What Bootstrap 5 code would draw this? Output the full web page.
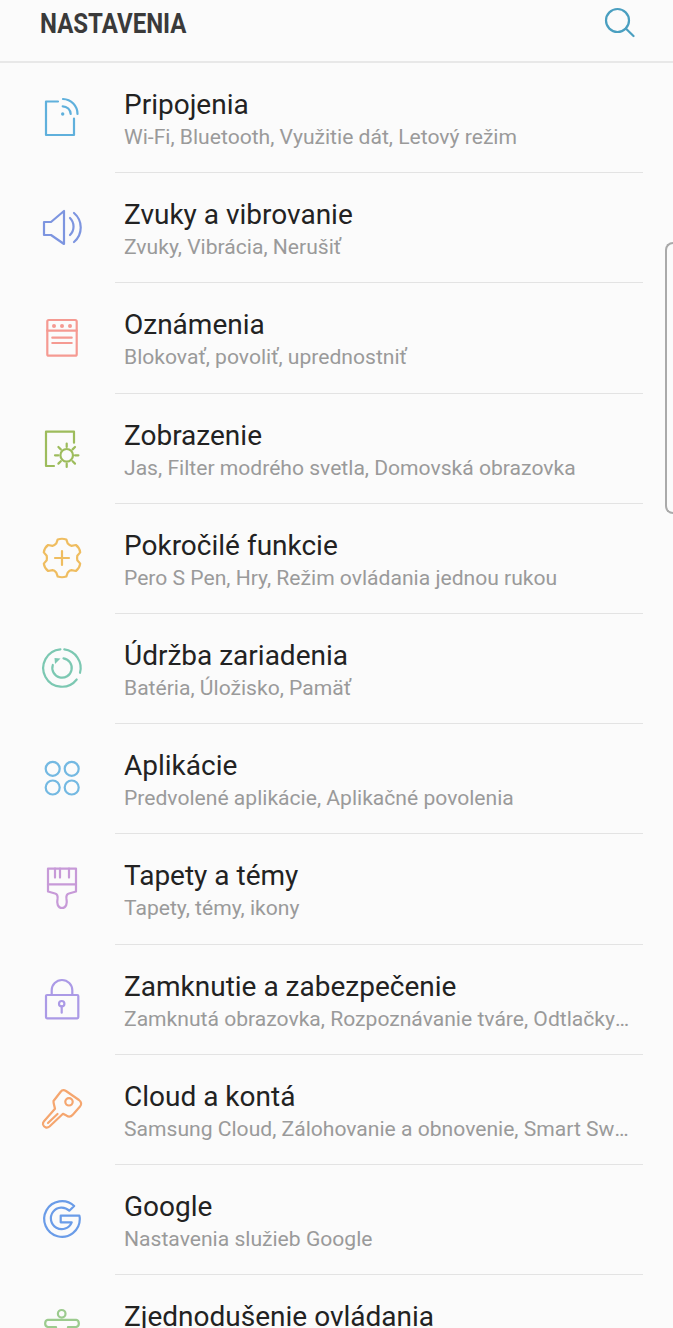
<!DOCTYPE html>
<html lang="sk">
<head>
    <meta charset="UTF-8">
    <meta name="viewport" content="width=device-width, initial-scale=1.0">
    <title>Nastavenia</title>
    <link href="https://cdn.jsdelivr.net/npm/bootstrap@5.3.0/dist/css/bootstrap.min.css" rel="stylesheet">
    <style>
        html, body {
            height: 1328px;
            overflow: hidden;
        }
        body {
            background-color: #fbfbfb;
            font-family: Roboto, sans-serif;
        }
        .top-bar {
            height: 63px;
            padding: 0 38px 0 40px;
            border-bottom: 2px solid #e8e8e8;
        }
        .top-title {
            font-size: 27px;
            font-weight: 700;
            color: #3a3a3a;
            transform: scaleX(.89);
            transform-origin: left center;
            line-height: 1;
            margin-top: -12px;
        }
        .search-ico {
            margin-top: -16px;
        }
        .set-row {
            height: 110.2px;
            padding-left: 40px;
            padding-right: 30px;
        }
        .ico-box {
            width: 75px;
            flex: none;
            padding-top: 32px;
        }
        .ico-box svg {
            display: block;
            overflow: visible;
        }
        .set-body {
            min-width: 0;
            padding: 26px 11px 0 9px;
            border-bottom: 1px solid #e3e3e3;
        }
        .set-name {
            font-size: 28px;
            line-height: 32px;
            color: #222;
        }
        .set-sub {
            font-size: 21.1px;
            line-height: 32px;
            color: #9a9a9a;
        }
        .ln {
            fill: none;
            stroke-width: 2.2;
            stroke-linecap: round;
            stroke-linejoin: round;
        }
        .scroll-grip {
            position: absolute;
            top: 242px;
            right: 0;
            width: 8px;
            height: 272px;
            border: 2px solid #aaa;
            border-right: 0;
            border-radius: 8px 0 0 8px;
        }
    </style>
</head>
<body>
    <div class="top-bar d-flex justify-content-between align-items-center">
        <div class="top-title">NASTAVENIA</div>
        <svg class="search-ico" width="32" height="32" viewBox="0 0 32 32">
            <circle class="ln" cx="14.5" cy="13.5" r="11.5" stroke="#4a9fc0"/>
            <path class="ln" d="M22.8 21.5L30.5 29" stroke="#4a9fc0"/>
        </svg>
    </div>

    <div class="d-flex flex-column">
        <div class="set-row d-flex">
            <div class="ico-box">
                <svg width="44" height="44" viewBox="0 0 44 44">
                    <g class="ln" stroke="#5fb0dc">
                        <path d="M18 6.5H6V40H34V23.5"/>
                        <path d="M22.7 11.3A8 8 0 0 1 30.7 19"/>
                        <path d="M23 4A15 15 0 0 1 37.5 19"/>
                    </g>
                    <circle cx="22.7" cy="19" r="1.7" fill="#5fb0dc"/>
                </svg>
            </div>
            <div class="set-body flex-grow-1">
                <div class="set-name text-truncate">Pripojenia</div>
                <div class="set-sub text-truncate">Wi-Fi, Bluetooth, Využitie dát, Letový režim</div>
            </div>
        </div>
        <div class="set-row d-flex">
            <div class="ico-box">
                <svg width="44" height="44" viewBox="0 0 44 44">
                    <g class="ln" stroke="#7d95e0">
                        <path d="M4 17H11L24 6V39L11 30H4Z"/>
                        <path d="M30 13A12 12 0 0 1 30 30"/>
                        <path d="M34 8A19 19 0 0 1 34 37"/>
                    </g>
                </svg>
            </div>
            <div class="set-body flex-grow-1">
                <div class="set-name text-truncate">Zvuky a vibrovanie</div>
                <div class="set-sub text-truncate">Zvuky, Vibrácia, Nerušiť</div>
            </div>
        </div>
        <div class="set-row d-flex">
            <div class="ico-box">
                <svg width="44" height="44" viewBox="0 0 44 44">
                    <g class="ln" stroke="#f59a92">
                        <rect x="7.3" y="5" width="29.4" height="35.7" rx="1.5"/>
                        <path d="M7.3 15.7H36.7M12.3 22.7H31.7M12.3 28H31.7"/>
                    </g>
                    <g fill="#f59a92">
                        <circle cx="14" cy="11" r="2"/>
                        <circle cx="22" cy="11" r="2"/>
                        <circle cx="30" cy="11" r="2"/>
                    </g>
                </svg>
            </div>
            <div class="set-body flex-grow-1">
                <div class="set-name text-truncate">Oznámenia</div>
                <div class="set-sub text-truncate">Blokovať, povoliť, uprednostniť</div>
            </div>
        </div>
        <div class="set-row d-flex">
            <div class="ico-box">
                <svg width="44" height="44" viewBox="0 0 44 44">
                    <g class="ln" stroke="#9dbc5c">
                        <path d="M14 40H6V5.7H34V16.7"/>
                        <circle cx="26.7" cy="29.3" r="6.3"/>
                        <path d="M26.7 17.6V21M26.7 37.6V41M15 29.3H18.4M35 29.3H38.4M18.4 21L20.8 23.4M32.6 35.2L35 37.6M18.4 37.6L20.8 35.2M32.6 23.4L35 21"/>
                    </g>
                </svg>
            </div>
            <div class="set-body flex-grow-1">
                <div class="set-name text-truncate">Zobrazenie</div>
                <div class="set-sub text-truncate">Jas, Filter modrého svetla, Domovská obrazovka</div>
            </div>
        </div>
        <div class="set-row d-flex">
            <div class="ico-box">
                <svg width="44" height="44" viewBox="0 0 44 44">
                    <g class="ln" stroke="#efbd60">
                        <path d="M17.7 3.5Q22 2 26.3 3.5L27.8 7.6Q29.5 9.5 31.5 9.8L35.9 9Q39.5 11.5 40.2 16.4L37.3 19.8Q36.9 22 37.3 24.2L40.2 27.6Q39.5 32.5 35.9 35L31.5 34.2Q29.5 34.5 27.8 36.4L26.3 40.5Q22 42 17.7 40.5L16.2 36.4Q14.5 34.5 12.5 34.2L8.1 35Q4.5 32.5 3.8 27.6L6.7 24.2Q7.1 22 6.7 19.8L3.8 16.4Q4.5 11.5 8.1 9L12.5 9.8Q14.5 9.5 16.2 7.6Z"/>
                        <path d="M22 15V29M15 22H29"/>
                    </g>
                </svg>
            </div>
            <div class="set-body flex-grow-1">
                <div class="set-name text-truncate">Pokročilé funkcie</div>
                <div class="set-sub text-truncate">Pero S Pen, Hry, Režim ovládania jednou rukou</div>
            </div>
        </div>
        <div class="set-row d-flex">
            <div class="ico-box">
                <svg width="44" height="44" viewBox="0 0 44 44">
                    <g class="ln" stroke="#7cc8b2">
                        <path d="M24.3 3.4A18.7 18.7 0 0 1 40 26.8"/>
                        <path d="M36.7 33.5A18.7 18.7 0 1 1 20.4 3.4"/>
                        <path d="M23.5 12.4A9.7 9.7 0 1 1 12.8 19"/>
                    </g>
                    <path d="M14.5 12L20.5 12.5L15 18Z" fill="#7cc8b2"/>
                </svg>
            </div>
            <div class="set-body flex-grow-1">
                <div class="set-name text-truncate">Údržba zariadenia</div>
                <div class="set-sub text-truncate">Batéria, Úložisko, Pamäť</div>
            </div>
        </div>
        <div class="set-row d-flex">
            <div class="ico-box">
                <svg width="44" height="44" viewBox="0 0 44 44">
                    <g class="ln" stroke="#74b9e2">
                        <circle cx="12.7" cy="12.8" r="7"/>
                        <circle cx="31.7" cy="12.8" r="7"/>
                        <circle cx="12.7" cy="31.5" r="7"/>
                        <circle cx="31.7" cy="31.5" r="7"/>
                    </g>
                </svg>
            </div>
            <div class="set-body flex-grow-1">
                <div class="set-name text-truncate">Aplikácie</div>
                <div class="set-sub text-truncate">Predvolené aplikácie, Aplikačné povolenia</div>
            </div>
        </div>
        <div class="set-row d-flex">
            <div class="ico-box">
                <svg width="44" height="44" viewBox="0 0 44 44">
                    <g class="ln" stroke="#c79ad8">
                        <path d="M8 2.6H36V25.5L29 27.5C26.5 28.2 26 30 26.5 33C27.3 37 26.5 42 22 42C17.5 42 16.7 37 17.5 33C18 30 17.5 28.2 15 27.5L8 25.5Z"/>
                        <path d="M8 18.3H36M15 2.6V11.6M20 2.6V11.6M29 2.6V11.6"/>
                    </g>
                </svg>
            </div>
            <div class="set-body flex-grow-1">
                <div class="set-name text-truncate">Tapety a témy</div>
                <div class="set-sub text-truncate">Tapety, témy, ikony</div>
            </div>
        </div>
        <div class="set-row d-flex">
            <div class="ico-box">
                <svg width="44" height="44" viewBox="0 0 44 44">
                    <g class="ln" stroke="#ab9ae6">
                        <rect x="6" y="18" width="32.3" height="23.3" rx="1"/>
                        <path d="M11.7 18V13.3A10.3 10.3 0 0 1 32.3 13.3V18"/>
                        <circle cx="21.7" cy="26.7" r="2.7"/>
                        <path d="M21.7 29.4V35.7"/>
                    </g>
                </svg>
            </div>
            <div class="set-body flex-grow-1">
                <div class="set-name text-truncate">Zamknutie a zabezpečenie</div>
                <div class="set-sub text-truncate">Zamknutá obrazovka, Rozpoznávanie tváre, Odtlačky prstov</div>
            </div>
        </div>
        <div class="set-row d-flex">
            <div class="ico-box">
                <svg width="44" height="44" viewBox="0 0 44 44">
                    <g class="ln" stroke="#f5a66f">
                        <path d="M13.5 14L20.5 5C22 3 24 2.8 26 4L39 13C41.5 15 41.8 17.5 40 19.5L33 27.5C31 29.8 28.5 30 26.5 28.6L23 26.8L9.5 39.5C7 41.5 4 40.5 3 37.5C2.8 36.3 3 35.3 4 34.2L15 21.8C14.5 19 13.3 16.5 13.5 14Z"/>
                        <circle cx="29" cy="14.8" r="3.7"/>
                        <path d="M8 36L17.5 27"/>
                    </g>
                </svg>
            </div>
            <div class="set-body flex-grow-1">
                <div class="set-name text-truncate">Cloud a kontá</div>
                <div class="set-sub text-truncate">Samsung Cloud, Zálohovanie a obnovenie, Smart Switch</div>
            </div>
        </div>
        <div class="set-row d-flex">
            <div class="ico-box">
                <svg width="44" height="44" viewBox="0 0 44 44">
                    <path class="ln" stroke="#6a9ce8" d="M34.2 9A17.8 17.8 0 1 0 39.8 22C39.8 20.8 39.7 19.8 39.4 18.7H20.7V25.3H31.7A10.8 10.8 0 1 1 29.3 13.7Z"/>
                </svg>
            </div>
            <div class="set-body flex-grow-1">
                <div class="set-name text-truncate">Google</div>
                <div class="set-sub text-truncate">Nastavenia služieb Google</div>
            </div>
        </div>
        <div class="set-row d-flex">
            <div class="ico-box">
                <svg width="44" height="44" viewBox="0 0 44 44">
                    <g class="ln" stroke="#9ccb8e">
                        <circle cx="21.7" cy="6.8" r="3.8"/>
                        <path d="M8 20H16V34H28V20H36A3.7 3.7 0 0 0 36 12.8H8A3.7 3.7 0 0 0 8 20Z"/>
                    </g>
                </svg>
            </div>
            <div class="set-body flex-grow-1">
                <div class="set-name text-truncate">Zjednodušenie ovládania</div>
            </div>
        </div>
    </div>

    <div class="scroll-grip"></div>
    <script src="https://cdn.jsdelivr.net/npm/bootstrap@5.3.0/dist/js/bootstrap.bundle.min.js"></script>
</body>
</html>
